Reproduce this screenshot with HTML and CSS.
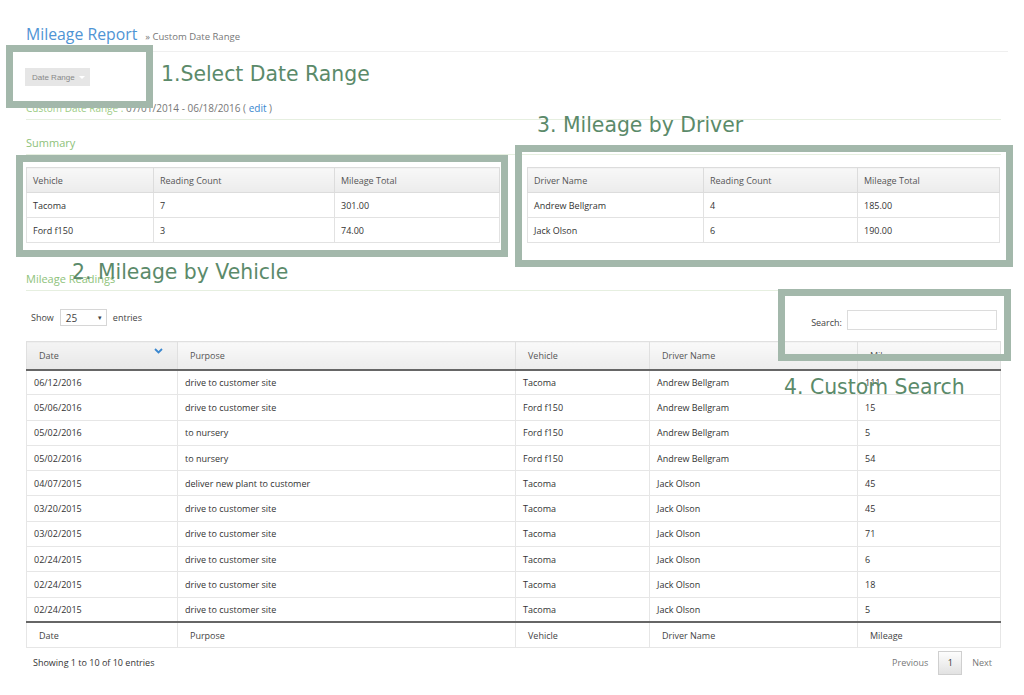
FILE: index.html
```html
<!DOCTYPE html>
<html>
<head>
<meta charset="utf-8">
<link rel="stylesheet" href="styles.css">
</head>
<body>
<div class="page">
  <div class="page-header">
    <h1 class="title">Mileage Report</h1>
    <span class="crumb">&raquo; Custom Date Range</span>
  </div>

  <div class="toolbar">
    <button class="date-btn">Date Range <span class="caret"></span></button>
  </div>

  <div class="range-line"><span class="range-lbl">Custom Date Range :</span> 07/01/2014 - 06/18/2016 ( <a class="edit">edit</a> )</div>

  <div class="section-title">Summary</div>

  <div class="summary-grid">
    <table class="sum">
      <colgroup><col style="width:127px"><col style="width:181px"><col></colgroup>
      <thead><tr><th>Vehicle</th><th>Reading Count</th><th>Mileage Total</th></tr></thead>
      <tbody>
        <tr><td>Tacoma</td><td>7</td><td>301.00</td></tr>
        <tr><td>Ford f150</td><td>3</td><td>74.00</td></tr>
      </tbody>
    </table>
    <table class="sum">
      <colgroup><col style="width:176px"><col style="width:154px"><col></colgroup>
      <thead><tr><th>Driver Name</th><th>Reading Count</th><th>Mileage Total</th></tr></thead>
      <tbody>
        <tr><td>Andrew Bellgram</td><td>4</td><td>185.00</td></tr>
        <tr><td>Jack Olson</td><td>6</td><td>190.00</td></tr>
      </tbody>
    </table>
  </div>

  <div class="section-title readings">Mileage Readings</div>

  <div class="dt-top">
    <div class="dt-length">Show <span class="select">25<span class="sel-arrow">&#9662;</span></span> entries</div>
    <div class="dt-search"><span class="search-lbl">Search:</span><span class="search-input"></span></div>
  </div>

  <table class="main">
    <colgroup><col style="width:151px"><col style="width:338px"><col style="width:134px"><col style="width:208px"><col></colgroup>
    <thead>
      <tr>
        <th class="sorted">Date<svg class="chev" width="9" height="6" viewBox="0 0 9 6"><path d="M1 1 L4.5 4.5 L8 1" fill="none" stroke="#3a87cf" stroke-width="1.8"/></svg></th>
        <th>Purpose</th><th>Vehicle</th><th>Driver Name</th><th>Mileage</th>
      </tr>
    </thead>
    <tbody>
      <tr><td>06/12/2016</td><td>drive to customer site</td><td>Tacoma</td><td>Andrew Bellgram</td><td>111</td></tr>
      <tr><td>05/06/2016</td><td>drive to customer site</td><td>Ford f150</td><td>Andrew Bellgram</td><td>15</td></tr>
      <tr><td>05/02/2016</td><td>to nursery</td><td>Ford f150</td><td>Andrew Bellgram</td><td>5</td></tr>
      <tr><td>05/02/2016</td><td>to nursery</td><td>Ford f150</td><td>Andrew Bellgram</td><td>54</td></tr>
      <tr><td>04/07/2015</td><td>deliver new plant to customer</td><td>Tacoma</td><td>Jack Olson</td><td>45</td></tr>
      <tr><td>03/20/2015</td><td>drive to customer site</td><td>Tacoma</td><td>Jack Olson</td><td>45</td></tr>
      <tr><td>03/02/2015</td><td>drive to customer site</td><td>Tacoma</td><td>Jack Olson</td><td>71</td></tr>
      <tr><td>02/24/2015</td><td>drive to customer site</td><td>Tacoma</td><td>Jack Olson</td><td>6</td></tr>
      <tr><td>02/24/2015</td><td>drive to customer site</td><td>Tacoma</td><td>Jack Olson</td><td>18</td></tr>
      <tr><td>02/24/2015</td><td>drive to customer site</td><td>Tacoma</td><td>Jack Olson</td><td>5</td></tr>
    </tbody>
    <tfoot>
      <tr><th>Date</th><th>Purpose</th><th>Vehicle</th><th>Driver Name</th><th>Mileage</th></tr>
    </tfoot>
  </table>

  <div class="dt-bottom">
    <div class="dt-info">Showing 1 to 10 of 10 entries</div>
    <div class="pager"><span class="pg-link">Previous</span><span class="pg-cur">1</span><span class="pg-link">Next</span></div>
  </div>

  <div class="anno-box box1"></div>
  <div class="anno-box box2"></div>
  <div class="anno-box box3"></div>
  <div class="anno-box box4"></div>
  <div class="anno-text t1">1.Select Date Range</div>
  <div class="anno-text t2">2. Mileage by Vehicle</div>
  <div class="anno-text t3">3. Mileage by Driver</div>
  <div class="anno-text t4">4. Custom Search</div>
</div>
</body>
</html>
```

FILE: styles.css
```css
html, body {
  margin: 0;
  padding: 0;
  background: #fff;
}
body {
  font-family: "Open Sans", "Liberation Sans", sans-serif;
  color: #333;
  font-size: 9px;
  overflow: hidden;
}
.page {
  position: relative;
  width: 975px;
  padding-left: 26px;
  height: 695px;
}
.page-header {
  display: flex;
  align-items: baseline;
  gap: 8px;
  padding: 22px 0 5px;
  margin-right: -7px;
  border-bottom: 1px solid #efefef;
}
.title {
  margin: 0;
  font-size: 15.8px;
  line-height: 24px;
  font-weight: 400;
  color: #4f94d4;
}
.crumb {
  font-size: 9.5px;
  color: #777;
}
.toolbar {
  margin-top: 16px;
  height: 18px;
  margin-left: -1px;
}
.date-btn {
  height: 18px;
  width: 65px;
  padding: 0 0 0 7px;
  border: none;
  background: #e6e6e6;
  font-family: "Liberation Sans", Arial, sans-serif;
  font-size: 8px;
  color: #888;
  text-align: left;
  display: flex;
  align-items: center;
  gap: 4px;
}
.caret {
  width: 0;
  height: 0;
  border-left: 3px solid transparent;
  border-right: 3px solid transparent;
  border-top: 3px solid #fff;
}
.range-line {
  margin-top: 14px;
  line-height: 16px;
  padding-bottom: 3px;
  border-bottom: 1px solid #e6efe0;
  font-size: 10px;
  color: #777;
}
.range-lbl { color: #9ccc85; }
.edit { color: #3a87cf; }
.section-title {
  margin-top: 15px;
  line-height: 16px;
  padding-bottom: 3px;
  border-bottom: 1px solid #e6efe0;
  font-size: 11px;
  color: #8ec27a;
}
.section-title.readings { margin-top: 28px; }
.summary-grid {
  margin-top: 12px;
  display: grid;
  grid-template-columns: 474px 473px;
  column-gap: 27px;
}
table {
  border-collapse: collapse;
  table-layout: fixed;
  width: 100%;
  font-size: 9px;
}
.sum th, .sum td {
  height: 25px;
  padding: 0 6px;
  text-align: left;
  font-weight: 400;
  border: 1px solid #e2e2e2;
  box-sizing: border-box;
}
.sum th {
  background: linear-gradient(#f8f8f8, #ececec);
  border-color: #dcdcdc;
  color: #555;
}
.sum td { color: #333; }

.dt-top {
  margin-top: 18px;
  display: flex;
  justify-content: space-between;
  align-items: flex-start;
  height: 21px;
}
.dt-length {
  display: flex;
  align-items: center;
  gap: 6px;
  margin-left: 5px;
  color: #444;
}
.select {
  width: 47px;
  height: 17px;
  box-sizing: border-box;
  border: 1px solid #d6d6d6;
  display: flex;
  align-items: center;
  padding-left: 5px;
  font-size: 10px;
}
.sel-arrow {
  margin-left: auto;
  margin-right: 4px;
  font-size: 7px;
  color: #444;
}
.dt-search {
  display: flex;
  align-items: center;
  gap: 5px;
  margin-top: 1px;
  margin-right: 4px;
}
.search-lbl {
  padding-top: 4px;
  color: #444;
}
.search-input {
  width: 150px;
  height: 20px;
  box-sizing: border-box;
  border: 1px solid #dcdcdc;
}
.main { margin-top: 11px; }
.main th, .main td {
  text-align: left;
  font-weight: 400;
  box-sizing: border-box;
  border: 1px solid #e6e6e6;
}
.main td {
  height: 25.3px;
  padding: 0 7px;
  color: #333;
}
.main thead th {
  height: 28px;
  padding: 0 12px;
  background: linear-gradient(#f9f9f9, #ededed);
  border-color: #e0e0e0;
  border-bottom: 2px solid #666;
  color: #555;
  position: relative;
}
.main thead th.sorted {
  background: linear-gradient(#f4f4f4, #e8e8e8);
}
.chev {
  position: absolute;
  right: 14px;
  top: 6px;
}
.main tfoot th {
  height: 25px;
  padding: 0 12px;
  border: 1px solid #e6e6e6;
  border-top: 2px solid #666;
  color: #444;
}
.dt-bottom {
  margin-top: 3px;
  display: flex;
  justify-content: space-between;
  align-items: center;
  height: 24px;
}
.dt-info {
  margin-left: 7px;
  color: #333;
}
.pager {
  display: flex;
  align-items: center;
  color: #777;
}
.pg-link { padding: 0 10px; }
.pg-cur {
  width: 24px;
  height: 24px;
  box-sizing: border-box;
  border: 1px solid #cfcfcf;
  background: linear-gradient(#fdfdfd, #e2e2e2);
  display: flex;
  align-items: center;
  justify-content: center;
  color: #333;
}
.pager .pg-link:last-child { padding-right: 9px; }

.anno-box {
  position: absolute;
  box-sizing: border-box;
  border: 7px solid #a3b8ab;
}
.box1 { left: 6px; top: 45px; width: 147px; height: 63px; }
.box2 { left: 16px; top: 155px; width: 492px; height: 102px; }
.box3 { left: 515px; top: 145px; width: 498px; height: 122px; }
.box4 { left: 778px; top: 289px; width: 233px; height: 72px; }
.anno-text {
  position: absolute;
  font-family: "DejaVu Sans", sans-serif;
  font-size: 20.4px;
  line-height: 20px;
  color: #5b8a6a;
  white-space: nowrap;
}
.t1 { left: 161px; top: 64px; }
.t2 { left: 72px; top: 262px; }
.t3 { left: 537px; top: 115px; }
.t4 { left: 784px; top: 377px; }
```
